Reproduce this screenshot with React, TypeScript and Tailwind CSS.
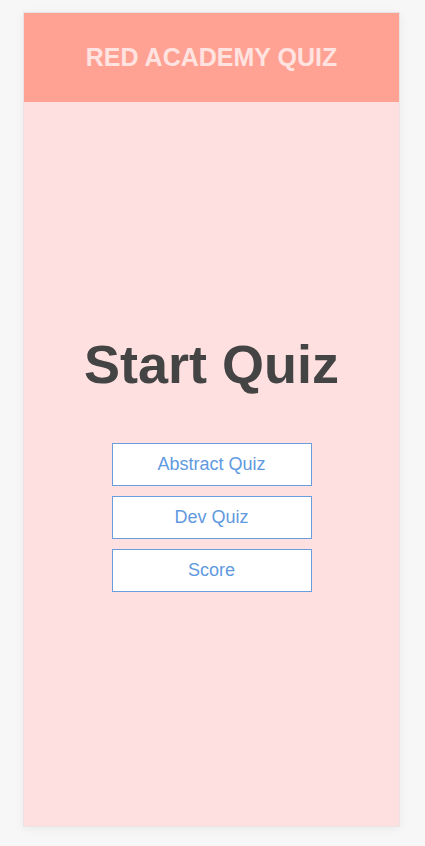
const buttons = ["Abstract Quiz", "Dev Quiz", "Score"];

export default function App() {
  return (
    <div className="min-h-[846px] bg-[#f7f7f7] pt-[12px] font-['Liberation_Sans',Arial,sans-serif]">
      <div className="ml-[23px] flex h-[815px] w-[377px] flex-col border border-[#ebe3e3] bg-[#ffe0e0] shadow-[0_2px_10px_rgba(0,0,0,0.06)]">
        <header className="flex h-[89px] shrink-0 items-center justify-center bg-[#ffa193]">
          <h2 className="text-[25px] font-bold text-[#ffe3e0]">RED ACADEMY QUIZ</h2>
        </header>
        <main className="flex flex-1 flex-col items-center justify-center pt-[1px]">
          <h1 className="text-[54px] leading-none font-bold text-[#444444]">Start Quiz</h1>
          <div className="mt-[52px] flex flex-col gap-[10px]">
            {buttons.map((b) => (
              <button
                key={b}
                className="h-[43px] w-[200px] border border-[#6a9de0] bg-white text-[18px] text-[#5f9ae0]"
              >
                {b}
              </button>
            ))}
          </div>
        </main>
      </div>
    </div>
  );
}
